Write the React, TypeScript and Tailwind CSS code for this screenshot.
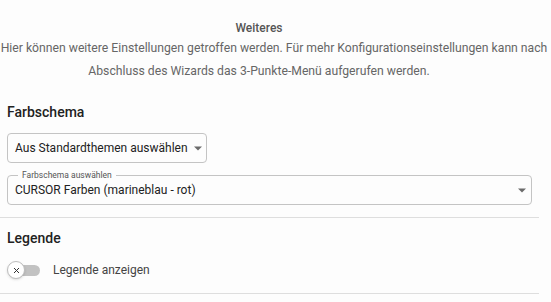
function Caret() {
  return (
    <svg width="8" height="5" viewBox="0 0 8 5" className="shrink-0">
      <path d="M0 0.5 L8 0.5 L4 4.5 Z" fill="#6b6b6b" />
    </svg>
  )
}

export default function App() {
  return (
    <div
      className="w-[551px] h-[302px] bg-[#fdfdfd] overflow-hidden text-[#222]"
      style={{ fontFamily: 'Roboto, "Open Sans", sans-serif' }}
    >
      <div className="w-[539px]">
        {/* Header */}
        <div className="pt-[19px]">
          <div className="w-[518px] text-center text-[12px] font-medium text-[#555] leading-[18px]">Weiteres</div>
          <div className="text-[12.2px] text-[#666] leading-[23px] whitespace-nowrap">
            <div className="w-[548px] text-center">
              Hier können weitere Einstellungen getroffen werden. Für mehr Konfigurationseinstellungen kann nach
            </div>
            <div className="w-[518px] text-center">Abschluss des Wizards das 3-Punkte-Menü aufgerufen werden.</div>
          </div>
        </div>

        {/* Farbschema */}
        <section className="mt-[19px] px-[7px]">
          <h2 className="text-[14px] font-medium leading-[20px]">Farbschema</h2>
          <div className="mt-[11px] w-[200px] h-[30px] border border-[#c4c4c4] rounded-[4px] flex items-center justify-between pl-[7px] pr-[4px]">
            <span className="text-[12px] text-[#222] whitespace-nowrap">Aus Standardthemen auswählen</span>
            <Caret />
          </div>
          <div className="relative mt-[12px] h-[30px] border border-[#c4c4c4] rounded-[4px] flex items-center justify-between pl-[7px] pr-[5px]">
            <span className="absolute -top-[7px] left-[10px] px-[4px] bg-[#fdfdfd] text-[8.5px] leading-[12px] text-[#555]">
              Farbschema auswählen
            </span>
            <span className="text-[12px] text-[#222] whitespace-nowrap">CURSOR Farben (marineblau - rot)</span>
            <Caret />
          </div>
        </section>

        <div className="mt-[12px] border-t border-[#dedede]" />

        {/* Legende */}
        <section className="px-[7px] pt-[10px]">
          <h2 className="text-[14px] font-medium leading-[20px]">Legende</h2>
          <div className="mt-[13px] flex items-center gap-[13px]">
            <div className="relative w-[33px] h-[18px] flex items-center">
              <div className="absolute left-[9px] w-[24px] h-[11px] rounded-full bg-[#c2c2c2]" />
              <div className="relative w-[18px] h-[18px] rounded-full bg-white border border-[#bdbdbd] shadow-sm flex items-center justify-center">
                <svg width="7" height="7" viewBox="0 0 7 7">
                  <path d="M1 1 L6 6 M6 1 L1 6" stroke="#333" strokeWidth="1" />
                </svg>
              </div>
            </div>
            <span className="text-[12px] text-[#444]">Legende anzeigen</span>
          </div>
        </section>

        <div className="mt-[14px] border-t border-[#dedede]" />
      </div>
    </div>
  )
}
